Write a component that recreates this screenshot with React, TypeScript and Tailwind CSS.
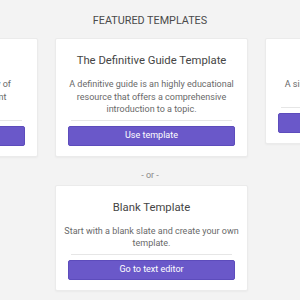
const featured = [
  {
    id: 1,
    title: 'Glossary Template',
    description: ['Define the essential terminology of', 'a subject and its most important', 'concepts.'],
  },
  {
    id: 2,
    title: 'The Definitive Guide Template',
    description: ['A definitive guide is an highly educational', 'resource that offers a comprehensive', 'introduction to a topic.'],
  },
  {
    id: 3,
    title: 'Listicle Template',
    description: ['A simple list of tips, ideas or examples', 'on a single topic.'],
  },
];

const TemplateCard = ({ title, description, action }: { title: string; description: string[]; action: string }) => {
  return (
    <div className="w-[193px] shrink-0 bg-white border border-[#ebebeb] rounded-[2px] shadow-[0_1px_2px_rgba(0,0,0,0.04)] px-[12px] pt-[12px] pb-[10px] flex flex-col items-center">
      <h3 className="text-[11.3px] leading-[20px] text-[#454545] whitespace-nowrap">{title}</h3>
      <p className="mt-[7px] text-[9px] leading-[12.5px] text-[#696969] text-center whitespace-nowrap">
        {description.map((line, i) => (
          <span key={i} className="block">{line}</span>
        ))}
      </p>
      <div className="mt-[4px] w-[161px] h-px bg-[#e6e6e6]" />
      <button className="mt-[5px] w-full h-[20px] rounded-[2px] bg-[#6a58c9] border border-[#5d4cbc] text-white text-[9px] leading-none">
        {action}
      </button>
    </div>
  );
};

export default function App() {
  return (
    <div className="w-[300px] h-[300px] overflow-hidden bg-[#f3f3f3] font-['Roboto',sans-serif]">
      <h2 className="pt-[14px] text-center text-[10.8px] leading-[14px] text-[#4a4a4a]">
        FEATURED TEMPLATES
      </h2>
      <div className="mt-[10px] flex justify-center items-start gap-[17px] pl-[3px]">
        {featured.map((t) => (
          <TemplateCard key={t.id} title={t.title} description={t.description} action="Use template" />
        ))}
      </div>
      <div className="mt-[12px] text-center text-[9px] leading-[12px] text-[#8a8a8a]">- or -</div>
      <div className="mt-[4px] flex justify-center pl-[3px]">
        <TemplateCard
          title="Blank Template"
          description={['Start with a blank slate and create your own', 'template.']}
          action="Go to text editor"
        />
      </div>
    </div>
  );
}
